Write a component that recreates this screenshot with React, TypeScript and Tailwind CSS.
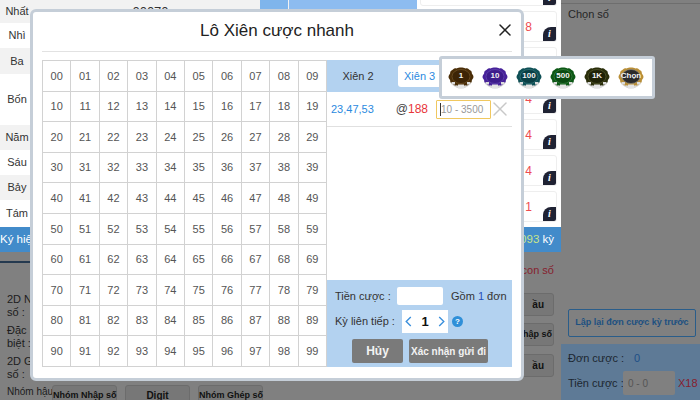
import { X } from "lucide-react";

const rows = Array.from({ length: 10 }, (_, r) =>
  Array.from({ length: 10 }, (_, c) => `${r}${c}`)
);

const leftRows = [
  { label: "Nhất", h: "h-[23px]", bg: "bg-[#f2f2f2]" },
  { label: "Nhì", h: "h-[25px]", bg: "bg-white" },
  { label: "Ba", h: "h-[26px]", bg: "bg-[#f2f2f2]" },
  { label: "Bốn", h: "h-[51px]", bg: "bg-white" },
  { label: "Năm", h: "h-[25px]", bg: "bg-[#f2f2f2]" },
  { label: "Sáu", h: "h-[25px]", bg: "bg-white" },
  { label: "Bảy", h: "h-[25px]", bg: "bg-[#f2f2f2]" },
  { label: "Tám", h: "h-[27px]", bg: "bg-white" },
];

const cards = ["", "8", "", "4", "4", "4", "1"];

const chips = [
  { label: "1", body: "#4a2d07", inner: "#3d2405", ring: "#7a5c30" },
  { label: "10", body: "#47229a", inner: "#3d1c8c", ring: "#6b50b4" },
  { label: "100", body: "#0e4f55", inner: "#0a3f45", ring: "#3f7f84" },
  { label: "500", body: "#0c5815", inner: "#0a4a11", ring: "#46904e" },
  { label: "1K", body: "#2a2e0a", inner: "#1f2206", ring: "#62663a" },
  { label: "Chọn", body: "#b98e36", inner: "#2a2a2a", ring: "#8d8d8d" },
];

function Chip({ label, body, inner, ring }: { label: string; body: string; inner: string; ring: string }) {
  return (
    <div className="relative w-[26px] h-[22px] flex items-center justify-center">
      <svg viewBox="0 0 26 22" className="absolute inset-0 w-[26px] h-[22px]">
        <ellipse cx="13" cy="12" rx="11" ry="9.5" fill="#d9d9d9" />
        <path
          d="M13 0.5c2 0 3 .4 4.5.9 1.4-.5 2.6 0 3.3.8.6.6 1 1 1.7 1.4 1.2.6 1.3 1.7 1.3 2.5 0 .7.6 1.2 1.2 2.1.6 1 .6 2.4 0 3.4-.6.9-1.2 1.4-1.2 2.1 0 .9-.2 1.8-1.3 2.5-.8.4-1.2.8-1.7 1.3-.8.8-2 1.3-3.3.8-1.5.5-2.5.9-4.5.9s-3-.4-4.5-.9c-1.3.5-2.5 0-3.3-.8-.5-.5-.9-.9-1.7-1.3-1.1-.7-1.3-1.6-1.3-2.5 0-.7-.6-1.2-1.2-2.1-.6-1-.6-2.4 0-3.4.6-.9 1.2-1.4 1.2-2.1 0-.8.1-1.9 1.3-2.5.7-.4 1.1-.8 1.7-1.4.7-.8 1.9-1.3 3.3-.8 1.5-.5 2.5-.9 4.5-.9z"
          fill={body}
        />
        <rect x="10" y="17.5" width="6" height="4" fill="#e4e4e4" />
        <rect x="3.5" y="15" width="3.5" height="2.5" fill="#dcdcdc" />
        <rect x="19" y="15" width="3.5" height="2.5" fill="#dcdcdc" />
        <ellipse cx="13" cy="9.5" rx="9" ry="7" fill={inner} stroke={ring} strokeWidth="0.6" />
      </svg>
      <span className="relative text-[8px] text-[#f2f2f2] font-bold leading-none mb-[4px]">{label}</span>
    </div>
  );
}

function InfoBadge() {
  return (
    <div className="w-[13px] h-[14px] bg-[#1f2233] rounded-tl-[8px] rounded-br-[2px] flex items-center justify-center text-white text-[10px] font-bold italic font-['Liberation_Serif',serif] leading-none">
      i
    </div>
  );
}

export default function App() {
  return (
    <div className="relative w-[700px] h-[400px] overflow-hidden bg-[#808080] font-['Liberation_Sans',sans-serif] text-[11px] text-[#333]">
      <div className="flex h-full">
        {/* trang nền bên trái */}
        <div className="w-[561px] shrink-0 flex flex-col">
          <div className="flex h-[227px] shrink-0 bg-white">
            <div className="w-[417px] flex flex-col">
              {leftRows.map((row) => (
                <div key={row.label} className={`flex ${row.h} ${row.bg}`}>
                  <div className="w-[34px] flex items-center justify-center">{row.label}</div>
                  <div className="w-[226px] pl-[7px] flex items-center justify-center text-[13px]">
                    {row.label === "Nhất" ? "00070" : ""}
                  </div>
                  <div className="w-[28px] mr-[1px] bg-[#7fb5ec] text-center pt-[5px]">{row.label === "Nhất" ? "1" : ""}</div>
                  <div className="flex-1 bg-[#8dbcf0]" />
                </div>
              ))}
            </div>
            <div className="flex-1 h-[222px] flex flex-col justify-end gap-[5px] overflow-hidden pl-[3px] pr-[4px]">
              {cards.map((red, i) => (
                <div
                  key={i}
                  className="h-[31px] shrink-0 flex justify-end bg-white border border-[#eeeeee] rounded-[3px]"
                >
                  <span className="self-center mr-[11px] text-[12px] text-[#ee4b50]">{red}</span>
                  <div className="self-end">
                    <InfoBadge />
                  </div>
                </div>
              ))}
            </div>
          </div>
          <div className="h-[25px] shrink-0 bg-[#428bca] flex items-center justify-between text-white text-[11.5px]">
            <span className="whitespace-nowrap">Ký hiệu</span>
            <span className="pr-[7px]">
              <span className="text-[#c9e58a]">093</span> kỳ
            </span>
          </div>
          <div className="flex-1 min-h-0 flex flex-col px-[7px] text-[#1c1c1c]">
            <div className="w-[300px] h-[2px] shrink-0 mt-[9px] -ml-[7px] bg-[#24394f]" />
            <div className="h-[14px] shrink-0 flex items-center justify-end text-[#86202e]">con số</div>
            <div className="mt-[16px] flex flex-col gap-[8px] leading-[13px]">
              <div className="flex justify-between h-[23px] shrink-0">
                <span>2D Nhập<br />số :</span>
                <span className="w-[60px] bg-[#777] border border-[#6c6c6c] rounded-[3px] font-bold text-[10px] flex items-center justify-end pr-[9px] text-[#111]">ầu</span>
              </div>
              <div className="flex justify-between h-[23px] shrink-0 mt-[-1px]">
                <span className="pt-[1px]">Đặc<br />biệt :</span>
                <span className="w-[60px] bg-[#777] border border-[#6c6c6c] rounded-[3px] font-bold text-[9px] flex items-center justify-end pr-[1px] text-[#111]">hập số</span>
              </div>
              <div className="flex justify-between h-[23px] shrink-0">
                <span className="pt-[1px]">2D Ghép<br />số :</span>
                <span className="w-[60px] bg-[#777] border border-[#6c6c6c] rounded-[3px] font-bold text-[10px] flex items-center justify-end pr-[9px] text-[#111]">ầu</span>
              </div>
              <div className="flex shrink-0">
                <span className="w-[45px] whitespace-nowrap text-[10px]">Nhóm hậu<br />nhị :</span>
                <div className="flex gap-[8px] font-bold text-[9px] text-[#111]">
                  <span className="w-[65px] h-[30px] bg-[#777] border border-[#6c6c6c] rounded-[3px] text-center pt-[3px] whitespace-nowrap">Nhóm Nhập số</span>
                  <span className="w-[65px] h-[30px] bg-[#777] border border-[#6c6c6c] rounded-[3px] text-center pt-[3px] text-[10px]">Digit</span>
                  <span className="w-[65px] h-[30px] bg-[#777] border border-[#6c6c6c] rounded-[3px] text-center pt-[3px] whitespace-nowrap">Nhóm Ghép số</span>
                </div>
              </div>
            </div>
          </div>
        </div>

        {/* cột phải */}
        <div className="flex-1 flex flex-col">
          <div className="h-[4px] border-b border-[#6e6e6e]" />
          <div className="flex-1 pl-[7px] pt-[2px] text-[#262626]">Chọn số</div>
          <div className="ml-[7px] mr-[4px] mb-[7px] h-[28px] border border-[#2a5d8a] rounded-[2px] flex items-center justify-center text-[#1d5080] font-bold text-[9px] whitespace-nowrap">
            Lập lại đơn cược kỳ trước
          </div>
          <div className="h-[56px] bg-[#5e7a96] pl-[7px] pt-[7px] text-[#1c2630]">
            <div className="flex h-[14px] items-center">
              <span className="w-[66px]">Đơn cược :</span>
              <span className="text-[#1d4f87]">0</span>
            </div>
            <div className="flex items-center mt-[6px]">
              <span className="w-[55px] whitespace-nowrap">Tiền cược :</span>
              <span className="w-[52px] h-[24px] bg-[#808080] rounded-[2px] pl-[5px] flex items-center text-[10px] text-[#555]">0 - 0</span>
              <span className="ml-[3px] text-[#86202e]">X18</span>
            </div>
          </div>
        </div>
      </div>

      {/* hộp thoại */}
      <div className="absolute left-[30px] top-[9px] w-[494px] h-[372px] bg-white border-[3px] border-[#c5ced8] rounded-[6px] px-[9px]">
        <div className="relative h-[40px] pb-[2px] border-b border-[#e2e2e2] flex items-center justify-center text-[17px] text-[#222]">
          Lô Xiên cược nhanh
          <X size={20} strokeWidth={1.8} className="absolute -right-[3px] top-[8px] text-[#222]" />
        </div>
        <div className="flex mt-[8px]">
          <div className="w-[285px] shrink-0 grid grid-cols-10 border-t border-l border-[#d2d2d2]">
            {rows.flat().map((n) => (
              <div
                key={n}
                className="h-[30.6px] border-r border-b border-[#d2d2d2] flex items-center justify-center text-[#555]"
              >
                {n}
              </div>
            ))}
          </div>
          <div className="w-[185px] shrink-0 flex flex-col h-[307px]">
            <div className="h-[32px] bg-[#b3d2f0] flex items-center">
              <span className="w-[62px] text-center">Xiên 2</span>
              <span className="ml-[9px] w-[60px] h-[22px] bg-white rounded-[3px] text-[#2b8ae0] flex items-center pl-[6px]">Xiên 3</span>
            </div>
            <div className="h-[35px] border-b border-[#e0e0e0] flex items-center text-[#2b8ae0] pl-[4px]">
              <span className="w-[69px]">23,47,53</span>
              <span className="text-[#444] text-[12px]">@</span>
              <span className="text-[#e8353a] text-[12px]">188</span>
              <span className="ml-[8px] w-[55px] h-[19px] shrink-0 border border-[#f0c860] rounded-[1px] text-[10px] text-[#999] flex items-center pl-[3px]">
                <span className="border-l border-[#333] leading-[13px]">10 - 3500</span>
              </span>
              <X size={24} strokeWidth={1.4} className="-ml-[3px] shrink-0 text-[#c8c8c8]" />
            </div>
            <div className="flex-1" />
            <div className="h-[87px] bg-[#b3d2f0] pl-[8px] pt-[7px]">
              <div className="flex items-center h-[18px] whitespace-nowrap">
                <span className="w-[62px]">Tiền cược :</span>
                <span className="w-[46px] h-[18px] bg-white rounded-[2px]" />
                <span className="ml-[8px]">
                  Gồm <span className="text-[#2750b8]">1</span> đơn
                </span>
              </div>
              <div className="flex items-center h-[23px] mt-[5px] whitespace-nowrap">
                <span className="w-[67px]">Kỳ liên tiếp :</span>
                <span className="w-[46px] h-[23px] bg-white flex items-center justify-between px-[3px] text-[13px] font-bold text-[#111]">
                  <svg width="7" height="11" viewBox="0 0 7 12" fill="none" stroke="#3a8fdc" strokeWidth="1.5"><path d="M6 1 1 6l5 5" /></svg>
                  1
                  <svg width="7" height="11" viewBox="0 0 7 12" fill="none" stroke="#3a8fdc" strokeWidth="1.5"><path d="m1 1 5 5-5 5" /></svg>
                </span>
                <span className="ml-[4px] w-[11px] h-[11px] rounded-full bg-[#2f8fd8] text-white text-[8px] font-bold flex items-center justify-center">?</span>
              </div>
              <div className="flex mt-[6px] ml-[17px] gap-[6px] text-[#f2f2f2] font-bold">
                <span className="w-[51px] h-[24px] bg-[#7a7a7a] rounded-[2px] flex items-center justify-center text-[12px]">Hủy</span>
                <span className="w-[79px] h-[24px] bg-[#7a7a7a] rounded-[2px] flex items-center justify-center whitespace-nowrap text-[10px]">Xác nhận gửi đi</span>
              </div>
            </div>
          </div>
        </div>
      </div>

      {/* bảng chọn phỉnh */}
      <div className="absolute left-[439px] top-[56px] w-[216px] h-[43px] bg-white border-[3px] border-[#c5ced8] rounded-[3px] flex items-center gap-[8px] pl-[6px]">
        {chips.map((chip) => (
          <Chip key={chip.label} {...chip} />
        ))}
      </div>
    </div>
  );
}
